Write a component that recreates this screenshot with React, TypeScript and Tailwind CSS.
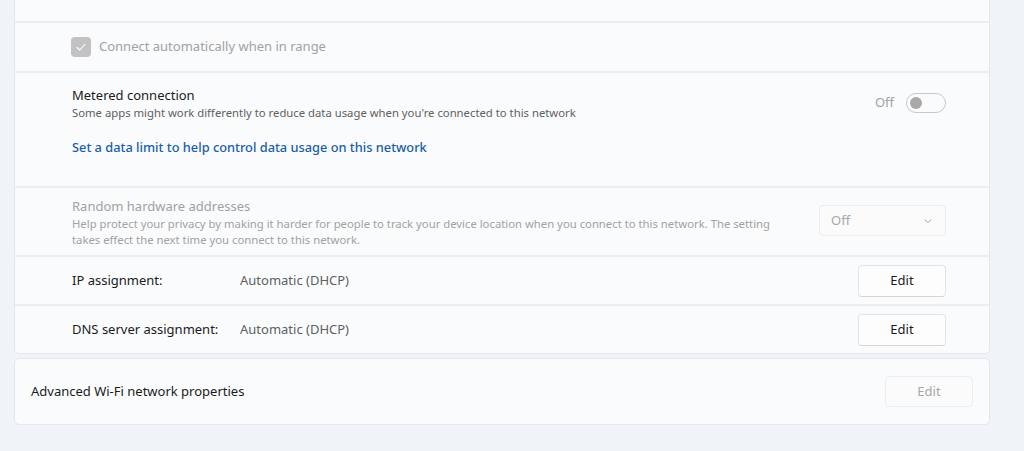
import React from "react";

const font = { fontFamily: '"Segoe UI", "Noto Sans", "Open Sans", sans-serif' };

function EditButton({ disabled }: { disabled?: boolean }) {
  return (
    <button
      className={
        disabled
          ? "h-[31px] w-[88px] rounded-[4px] border border-[#eceef1] bg-[#fbfbfc] text-[13px] text-[#a8a8a8]"
          : "h-[32px] w-[88px] rounded-[4px] border border-[#e3e4e6] border-b-[#d4d5d8] bg-[#fdfdfd] text-[13px] text-[#1b1b1b]"
      }
    >
      Edit
    </button>
  );
}

export default function App() {
  return (
    <div className="h-[451px] w-[1024px] overflow-hidden bg-[#f0f3f8] pl-[14px] pr-[34px]" style={font}>
      <div className="flex flex-col rounded-b-[5px] border-x border-b border-[#e4e7eb] bg-[#fafbfc]">
        <div className="h-[21px]" />
        {/* Connect automatically */}
        <div className="flex h-[50px] items-center border-t-2 border-[#eceef2] pl-[56px]">
          <div className="flex h-[20px] w-[20px] items-center justify-center rounded-[4px] bg-[#c2c2c2]">
            <svg width="14" height="14" viewBox="0 0 14 14" fill="none">
              <path d="M3 7.4 L5.8 10 L11 4.4" stroke="#ffffff" strokeWidth="1.1" strokeLinecap="round" strokeLinejoin="round" />
            </svg>
          </div>
          <span className="ml-[8px] text-[13px] text-[#a2a2a2]">Connect automatically when in range</span>
        </div>
        {/* Metered connection */}
        <div className="flex h-[115px] flex-col border-t-2 border-[#eceef2] pl-[57px] pr-[43px]">
          <div className="flex items-center justify-between pt-[12px]">
            <div className="flex flex-col">
              <span className="text-[13px] leading-[20px] text-[#1b1b1b]">Metered connection</span>
              <span className="text-[11.3px] leading-[16px] text-[#5f5f5f]">
                Some apps might work differently to reduce data usage when you're connected to this network
              </span>
            </div>
            <div className="flex items-center gap-[12px]">
              <span className="text-[13px] text-[#a2a2a2]">Off</span>
              <div className="flex h-[20px] w-[40px] items-center rounded-full border border-[#c8c8c8] px-[3px]">
                <div className="h-[12px] w-[12px] rounded-full bg-[#a9a9a9]" />
              </div>
            </div>
          </div>
          <span className="mt-[17px] text-[12.8px] font-medium text-[#1a5eaa]">
            Set a data limit to help control data usage on this network
          </span>
        </div>
        {/* Random hardware addresses */}
        <div className="flex h-[69px] items-center justify-between border-t-2 border-[#eceef2] pl-[57px] pr-[43px]">
          <div className="flex w-[712px] flex-col">
            <span className="text-[13px] leading-[20px] text-[#a2a2a2]">Random hardware addresses</span>
            <span className="text-[11.3px] leading-[16px] text-[#a2a2a2]">
              Help protect your privacy by making it harder for people to track your device location when you connect to this network. The setting takes effect the next time you connect to this network.
            </span>
          </div>
          <div className="mb-[2px] flex h-[31px] w-[127px] items-center justify-between rounded-[4px] border border-[#eceef1] bg-[#fbfbfc] pl-[11px] pr-[12px]">
            <span className="text-[13px] text-[#a8a8a8]">Off</span>
            <svg width="10" height="10" viewBox="0 0 10 10" fill="none">
              <path d="M2 3.8 L5 6.6 L8 3.8" stroke="#a8a8a8" strokeWidth="1" strokeLinecap="round" strokeLinejoin="round" />
            </svg>
          </div>
        </div>
        {/* IP assignment */}
        <div className="flex h-[49px] items-center border-t-2 border-[#eceef2] pl-[57px] pr-[43px]">
          <span className="w-[168px] text-[13px] text-[#1b1b1b]">IP assignment:</span>
          <span className="flex-1 text-[13px] text-[#5f5f5f]">Automatic (DHCP)</span>
          <EditButton />
        </div>
        {/* DNS */}
        <div className="flex h-[49px] items-center border-t-2 border-[#eceef2] pl-[57px] pr-[43px]">
          <span className="w-[168px] text-[13px] text-[#1b1b1b]">DNS server assignment:</span>
          <span className="flex-1 text-[13px] text-[#5f5f5f]">Automatic (DHCP)</span>
          <EditButton />
        </div>
      </div>
      <div className="mt-[4px] flex h-[67px] items-center justify-between rounded-[5px] border border-[#e4e7eb] bg-[#fafbfc] pl-[16px] pr-[16px]">
        <span className="text-[13px] text-[#1b1b1b]">Advanced Wi-Fi network properties</span>
        <EditButton disabled />
      </div>
    </div>
  );
}
